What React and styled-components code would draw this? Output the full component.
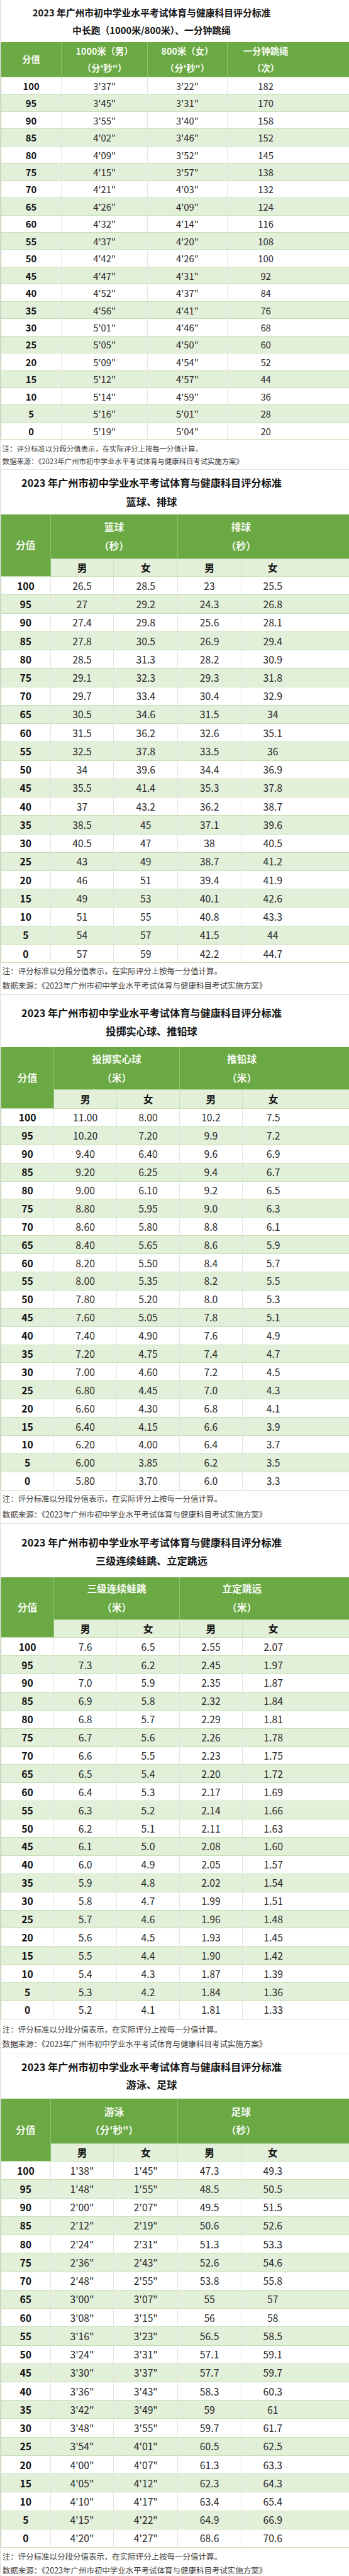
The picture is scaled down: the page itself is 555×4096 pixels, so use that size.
import styled, { createGlobalStyle } from "styled-components";

const GlobalStyle = createGlobalStyle`
  *, *::before, *::after { box-sizing: border-box; }
  body {
    margin: 0;
    background: #fff;
    font-family: "Noto Sans CJK SC", "Noto Sans", sans-serif;
  }
`;

const SCORES = [100, 95, 90, 85, 80, 75, 70, 65, 60, 55, 50, 45, 40, 35, 30, 25, 20, 15, 10, 5, 0];

const parse = (text) =>
  text
    .trim()
    .split("\n")
    .map((line) => line.trim().split(/\s+/));

const SECTIONS = [
  {
    key: "run",
    small: true,
    subtitle: "中长跑（1000米/800米）、一分钟跳绳",
    cols: [104, 148, 137, 211],
    heads: [
      ["1000米（男）", "（分'秒\"）"],
      ["800米（女）", "（分'秒\"）"],
      ["一分钟跳绳", "（次）"],
    ],
    title: { h: 72, pt: 7, lh: 30 },
    headH: 60,
    rowH: 29.67,
    note: { h: 50, pt: 4, lh: 22 },
    rows: parse(`
      3'37" 3'22" 182
      3'45" 3'31" 170
      3'55" 3'40" 158
      4'02" 3'46" 152
      4'09" 3'52" 145
      4'15" 3'57" 138
      4'21" 4'03" 132
      4'26" 4'09" 124
      4'32" 4'14" 116
      4'37" 4'20" 108
      4'42" 4'26" 100
      4'47" 4'31" 92
      4'52" 4'37" 84
      4'56" 4'41" 76
      5'01" 4'46" 68
      5'05" 4'50" 60
      5'09" 4'54" 52
      5'12" 4'57" 44
      5'14" 4'59" 36
      5'16" 5'01" 28
      5'19" 5'04" 20
    `),
  },
  {
    key: "ball",
    subtitle: "篮球、排球",
    cols: [85, 109, 110, 109, 187],
    groups: [
      ["篮球", "（秒）"],
      ["排球", "（秒）"],
    ],
    title: { h: 77, pt: 7, lh: 32 },
    headH: 76,
    subH: 31,
    rowH: 31.62,
    note: { h: 54, pt: 2, lh: 25 },
    rows: parse(`
      26.5 28.5 23 25.5
      27 29.2 24.3 26.8
      27.4 29.8 25.6 28.1
      27.8 30.5 26.9 29.4
      28.5 31.3 28.2 30.9
      29.1 32.3 29.3 31.8
      29.7 33.4 30.4 32.9
      30.5 34.6 31.5 34
      31.5 36.2 32.6 35.1
      32.5 37.8 33.5 36
      34 39.6 34.4 36.9
      35.5 41.4 35.3 37.8
      37 43.2 36.2 38.7
      38.5 45 37.1 39.6
      40.5 47 38 40.5
      43 49 38.7 41.2
      46 51 39.4 41.9
      49 53 40.1 42.6
      51 55 40.8 43.3
      54 57 41.5 44
      57 59 42.2 44.7
    `),
  },
  {
    key: "throw",
    subtitle: "投掷实心球、推铅球",
    cols: [91, 108, 108, 108, 185],
    groups: [
      ["投掷实心球", "（米）"],
      ["推铅球", "（米）"],
    ],
    title: { h: 90, pt: 15, lh: 31 },
    headH: 73,
    subH: 32,
    rowH: 31.24,
    note: { h: 57, pt: 2, lh: 26 },
    rows: parse(`
      11.00 8.00 10.2 7.5
      10.20 7.20 9.9 7.2
      9.40 6.40 9.6 6.9
      9.20 6.25 9.4 6.7
      9.00 6.10 9.2 6.5
      8.80 5.95 9.0 6.3
      8.60 5.80 8.8 6.1
      8.40 5.65 8.6 5.9
      8.20 5.50 8.4 5.7
      8.00 5.35 8.2 5.5
      7.80 5.20 8.0 5.3
      7.60 5.05 7.8 5.1
      7.40 4.90 7.6 4.9
      7.20 4.75 7.4 4.7
      7.00 4.60 7.2 4.5
      6.80 4.45 7.0 4.3
      6.60 4.30 6.8 4.1
      6.40 4.15 6.6 3.9
      6.20 4.00 6.4 3.7
      6.00 3.85 6.2 3.5
      5.80 3.70 6.0 3.3
    `),
  },
  {
    key: "jump",
    subtitle: "三级连续蛙跳、立定跳远",
    cols: [91, 108, 108, 108, 185],
    groups: [
      ["三级连续蛙跳", "（米）"],
      ["立定跳远", "（米）"],
    ],
    title: { h: 91, pt: 16, lh: 31 },
    headH: 73,
    subH: 31,
    rowH: 31.24,
    note: { h: 57, pt: 5, lh: 25 },
    rows: parse(`
      7.6 6.5 2.55 2.07
      7.3 6.2 2.45 1.97
      7.0 5.9 2.35 1.87
      6.9 5.8 2.32 1.84
      6.8 5.7 2.29 1.81
      6.7 5.6 2.26 1.78
      6.6 5.5 2.23 1.75
      6.5 5.4 2.20 1.72
      6.4 5.3 2.17 1.69
      6.3 5.2 2.14 1.66
      6.2 5.1 2.11 1.63
      6.1 5.0 2.08 1.60
      6.0 4.9 2.05 1.57
      5.9 4.8 2.02 1.54
      5.8 4.7 1.99 1.51
      5.7 4.6 1.96 1.48
      5.6 4.5 1.93 1.45
      5.5 4.4 1.90 1.42
      5.4 4.3 1.87 1.39
      5.3 4.2 1.84 1.36
      5.2 4.1 1.81 1.33
    `),
  },
  {
    key: "swim",
    subtitle: "游泳、足球",
    cols: [85, 109, 110, 109, 187],
    groups: [
      ["游泳", "（分'秒\"）"],
      ["足球", "（秒）"],
    ],
    title: { h: 78, pt: 9, lh: 30 },
    headH: 77,
    subH: 31,
    rowH: 31.62,
    note: { h: 52, pt: 3, lh: 24 },
    rows: parse(`
      1'38" 1'45" 47.3 49.3
      1'48" 1'55" 48.5 50.5
      2'00" 2'07" 49.5 51.5
      2'12" 2'19" 50.6 52.6
      2'24" 2'31" 51.3 53.3
      2'36" 2'43" 52.6 54.6
      2'48" 2'55" 53.8 55.8
      3'00" 3'07" 55 57
      3'08" 3'15" 56 58
      3'16" 3'23" 56.5 58.5
      3'24" 3'31" 57.1 59.1
      3'30" 3'37" 57.7 59.7
      3'36" 3'43" 58.3 60.3
      3'42" 3'49" 59 61
      3'48" 3'55" 59.7 61.7
      3'54" 4'01" 60.5 62.5
      4'00" 4'07" 61.3 63.3
      4'05" 4'12" 62.3 64.3
      4'10" 4'17" 63.4 65.4
      4'15" 4'22" 64.9 66.9
      4'20" 4'27" 68.6 70.6
    `),
  },
];

// the last column's text sits left of centre in the source, so it keeps a blank strip on the right
const TRAIL = 79;

const ScoreTable = ({ section }) => {
  const { small, cols, heads, groups, rows, headH, subH, rowH } = section;
  const last = cols.length - 1;

  return (
    <Table>
      <colgroup>
        {cols.map((w, i) => (
          <Col key={i} $w={w} />
        ))}
      </colgroup>
      <thead>
        {heads ? (
          <HeadRow $h={headH}>
            <HeadCell $small={small}>分值</HeadCell>
            {heads.map(([name, unit], i) => (
              <HeadCell key={i} $small={small} $trail={i === heads.length - 1}>
                {name}
                <br />
                {unit}
              </HeadCell>
            ))}
          </HeadRow>
        ) : (
          <>
            <HeadRow $h={headH}>
              <HeadCell rowSpan={2}>分值</HeadCell>
              {groups.map(([name, unit], i) => (
                <HeadCell key={i} colSpan={2} $trail={i === groups.length - 1}>
                  {name}
                  <br />
                  {unit}
                </HeadCell>
              ))}
            </HeadRow>
            <HeadRow $h={subH}>
              {["男", "女", "男", "女"].map((t, i) => (
                <SubCell key={i} $trail={i === 3}>
                  {t}
                </SubCell>
              ))}
            </HeadRow>
          </>
        )}
      </thead>
      <tbody>
        {rows.map((cells, r) => (
          <Row key={SCORES[r]} $h={rowH} $alt={r % 2 === 1}>
            <ScoreCell $small={small}>{SCORES[r]}</ScoreCell>
            {cells.map((v, c) => (
              <Cell key={c} $small={small} $trail={c + 1 === last}>
                {v}
              </Cell>
            ))}
          </Row>
        ))}
      </tbody>
    </Table>
  );
};

const App = () => (
  <>
    <GlobalStyle />
    <Page>
      {SECTIONS.map((section) => (
        <Section key={section.key}>
          <Title
            $small={section.small}
            $h={section.title.h}
            $pt={section.title.pt}
            $lh={section.title.lh}
          >
            2023 年广州市初中学业水平考试体育与健康科目评分标准
            <br />
            {section.subtitle}
          </Title>
          <ScoreTable section={section} />
          <Notes
            $small={section.small}
            $h={section.note.h}
            $pt={section.note.pt}
            $lh={section.note.lh}
          >
            <p>注：评分标准以分段分值表示，在实际评分上按每一分值计算。</p>
            <p>数据来源：《2023年广州市初中学业水平考试体育与健康科目考试实施方案》</p>
          </Notes>
        </Section>
      ))}
    </Page>
  </>
);

export default App;

const Page = styled.div`
  width: 600px;
  zoom: 0.925;
  background: #fff;
`;

const Section = styled.section`
  display: flex;
  flex-direction: column;
  border-left: 1px solid #dcdcdc;
  border-bottom: 2px solid #e4e4e4;
`;

const Title = styled.h2`
  margin: 0;
  height: ${(p) => p.$h}px;
  padding: ${(p) => p.$pt}px 80px 0 0;
  font-size: ${(p) => (p.$small ? 16 : 17.5)}px;
  line-height: ${(p) => p.$lh}px;
  font-weight: 700;
  text-align: center;
  color: #141414;
  white-space: nowrap;
`;

const Table = styled.table`
  width: 100%;
  border-collapse: collapse;
  table-layout: fixed;
  border-left: 1px solid #a9cf91;
`;

const Col = styled.col`
  width: ${(p) => p.$w}px;
`;

const HeadRow = styled.tr`
  height: ${(p) => p.$h}px;
`;

const HeadCell = styled.th`
  padding: 0 ${(p) => (p.$trail ? TRAIL : 0)}px 0 0;
  background: #6aa943;
  color: #f6fbf2;
  font-size: ${(p) => (p.$small ? 15.5 : 17)}px;
  line-height: ${(p) => (p.$small ? 30 : 32)}px;
  font-weight: 700;
  text-align: center;
  vertical-align: middle;
  white-space: nowrap;
  border-right: 1px solid #8fc270;
  border-bottom: 1px solid #b5d79f;

  &:last-child {
    border-right: none;
  }
`;

const SubCell = styled.th`
  padding: 0 ${(p) => (p.$trail ? TRAIL : 0)}px 0 0;
  background: #e2efd9;
  color: #111;
  font-size: 17px;
  font-weight: 700;
  text-align: center;
  border-right: 1px solid #cfe2c2;
  border-bottom: 1px solid #c3deb0;

  &:last-child {
    border-right: none;
  }
`;

const Row = styled.tr`
  height: ${(p) => p.$h}px;
  background: ${(p) => (p.$alt ? "#e2efd9" : "#fff")};
  border-bottom: 1px solid #c6dfb5;
`;

const Cell = styled.td`
  padding: 0 ${(p) => (p.$trail ? TRAIL : 0)}px 0 0;
  font-size: ${(p) => (p.$small ? 16 : 17)}px;
  color: #2a2a2a;
  text-align: center;
  vertical-align: middle;
  white-space: nowrap;
  border-right: 1px solid #e2e6df;

  &:last-child {
    border-right: none;
  }
`;

const ScoreCell = styled(Cell)`
  font-weight: 700;
  color: #111;
`;

const Notes = styled.div`
  height: ${(p) => p.$h}px;
  padding: ${(p) => p.$pt}px 0 0 3px;
  font-size: ${(p) => (p.$small ? 12.3 : 13.5)}px;
  line-height: ${(p) => p.$lh}px;
  color: #3d3d3d;
  white-space: nowrap;

  p {
    margin: 0;
  }
`;
